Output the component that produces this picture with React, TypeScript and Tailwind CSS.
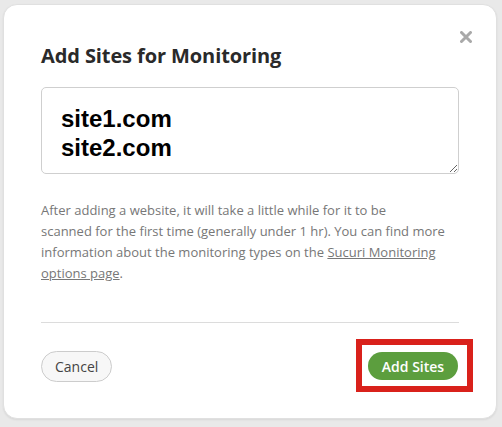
export default function App() {
  return (
    <div className="h-[427px] w-[502px] overflow-hidden bg-[#e9e9e9] pl-[3px] pt-[4px] font-['Open_Sans',sans-serif]">
      <div className="relative h-[415px] w-[494px] rounded-[14px] border border-[#e0e0e0] bg-white px-[37px] pt-[37px] shadow-[0_1px_2px_rgba(0,0,0,0.08)]">
        <button className="absolute right-[20px] top-[22px] p-1 text-[#a9a9a9]" aria-label="Close">
          <svg width="12" height="12" viewBox="0 0 12 12">
            <path d="M1.5 1.5 L10.5 10.5 M10.5 1.5 L1.5 10.5" stroke="currentColor" strokeWidth="3" strokeLinecap="round" />
          </svg>
        </button>

        <h2 className="text-[20px] font-bold leading-[28px] tracking-[-0.1px] text-[#2a2a2a]">Add Sites for Monitoring</h2>

        <textarea
          className="mt-[17px] block h-[87px] w-[418px] resize-y rounded-[5px] border border-[#cfcfcf] px-[19px] pt-[16px] font-['Liberation_Sans',Arial,sans-serif] text-[24px] font-bold leading-[29px] text-black outline-none"
          defaultValue={"site1.com\nsite2.com"}
        />

        <p className="mt-[26px] text-[13px] leading-[21px] text-[#777]">
          After adding a website, it will take a little while for it to be
          <br />
          scanned for the first time (generally under 1 hr). You can find more
          <br />
          information about the monitoring types on the{" "}
          <a href="#" className="underline">
            Sucuri Monitoring
          </a>
          <br />
          <a href="#" className="underline">
            options page
          </a>
          .
        </p>

        <div className="mt-[38px] h-px w-[418px] bg-[#dcdcdc]" />

        <div className="mt-[16px] flex w-[418px] items-start justify-between">
          <button className="mt-[12px] h-[31px] rounded-full border border-[#cccccc] bg-[#f7f7f7] px-[13px] text-[14px] text-[#444]">
            Cancel
          </button>
          <div className="-mr-[14px] border-[6px] border-[#d9211b] pb-[6px] pl-[6px] pr-[9px] pt-[7px]">
            <button className="block h-[28px] w-[90px] rounded-full bg-[#5c9e3e] text-[14px] font-semibold text-white">
              Add Sites
            </button>
          </div>
        </div>
      </div>
    </div>
  );
}
